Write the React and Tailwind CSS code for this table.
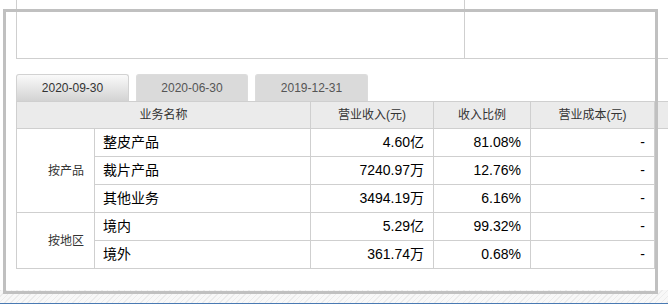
// 主营构成 — tabbed revenue breakdown table under a highlight frame.
const FONT = 'font-["Tahoma","Liberation_Sans","Noto_Sans_CJK_SC",sans-serif]'

const TABS = [
  { label: '2020-09-30', width: 'w-[113px]', active: true },
  { label: '2020-06-30', width: 'w-[112px]' },
  { label: '2019-12-31', width: 'w-[113px]' },
]

const GROUPS = [
  {
    name: '按产品',
    rows: [
      ['整皮产品', '4.60亿', '81.08%', '-'],
      ['裁片产品', '7240.97万', '12.76%', '-'],
      ['其他业务', '3494.19万', '6.16%', '-'],
    ],
  },
  {
    name: '按地区',
    rows: [
      ['境内', '5.29亿', '99.32%', '-'],
      ['境外', '361.74万', '0.68%', '-'],
    ],
  },
]

const cell = 'border border-[#cfcfcf] h-[28px] p-0'
const num = `${cell} text-right pr-[9px] text-[14px] text-black`

function Tab({ label, width, active }) {
  return (
    <div
      className={`${width} h-[27px] flex items-center justify-center rounded-t-[3px] border border-b-0 text-[12px] ${
        active
          ? 'border-[#d2d2d2] bg-gradient-to-b from-[#fafafa] to-[#d3d3d3] text-[#333]'
          : 'border-[#dcdcdc] bg-[#dadada] text-[#555]'
      }`}
    >
      {label}
    </div>
  )
}

export default function App() {
  return (
    <div className={`relative w-[668px] h-[304px] overflow-hidden bg-white ${FONT}`}>
      {/* tail of the block above */}
      <div className="ml-[16px] h-[59px] flex border-l border-b border-[#cfcfcf]">
        <div className="w-[448px] border-r border-[#cfcfcf]" />
      </div>

      <div className="mt-[15px] ml-[16px] flex gap-[7px]">
        {TABS.map((t) => (
          <Tab key={t.label} {...t} />
        ))}
      </div>

      <table className="ml-[16px] table-fixed border-collapse w-[652px]">
        <colgroup>
          <col className="w-[78px]" />
          <col className="w-[216px]" />
          <col className="w-[123px]" />
          <col className="w-[97px]" />
          <col className="w-[124px]" />
          <col className="w-[14px]" />
        </colgroup>
        <thead>
          <tr className="h-[27px] bg-[#ebebeb] text-[12px] text-[#333]">
            <th colSpan={2} className="border border-[#cfcfcf] font-normal p-0">业务名称</th>
            <th className="border border-[#cfcfcf] font-normal p-0">营业收入(元)</th>
            <th className="border border-[#cfcfcf] font-normal p-0">收入比例</th>
            <th className="border border-[#cfcfcf] font-normal p-0">营业成本(元)</th>
            <th className="border border-[#cfcfcf] border-r-0 p-0" />
          </tr>
        </thead>
        <tbody>
          {GROUPS.map((g) =>
            g.rows.map((r, i) => (
              <tr key={r[0]}>
                {i === 0 && (
                  <td
                    rowSpan={g.rows.length}
                    className="border border-[#cfcfcf] p-0 pr-[10px] text-right text-[12px] text-[#333]"
                  >
                    {g.name}
                  </td>
                )}
                <td className={`${cell} pl-[8px] text-[14px] text-black`}>{r[0]}</td>
                <td className={num}>{r[1]}</td>
                <td className={num}>{r[2]}</td>
                <td className={num}>{r[3]}</td>
                <td className="p-0" />
              </tr>
            ))
          )}
        </tbody>
      </table>

      <div className="mt-[21px] h-[13px] bg-[repeating-linear-gradient(135deg,#ececec_0px,#ececec_1px,#f8f8f8_1px,#f8f8f8_4px)]" />
      <div className="h-[2px] bg-[#4a7ab3]" />

      {/* highlight frame laid over the panel */}
      <div className="absolute left-[3px] top-[9px] w-[655px] h-[285px] border-[3px] border-[#c0c0c0] pointer-events-none" />
    </div>
  )
}
